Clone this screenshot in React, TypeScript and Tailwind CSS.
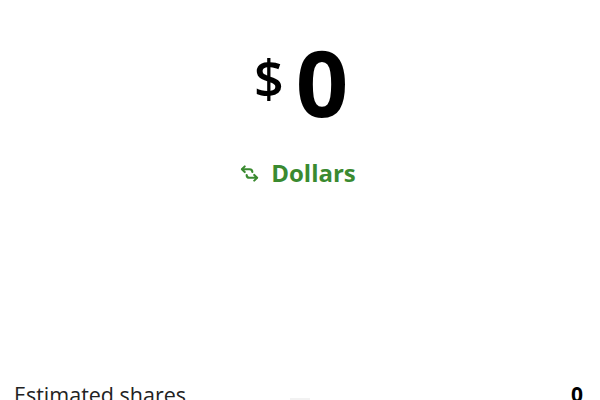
import React from "react";

function SwapIcon() {
  return (
    <svg
      viewBox="0 0 20 20"
      className="h-[19px] w-[19px]"
      fill="none"
      stroke="currentColor"
      strokeWidth={2.2}
      strokeLinecap="round"
      strokeLinejoin="round"
    >
      <path d="M5 2.5 2 5.5 5 8.5" />
      <path d="M2.5 5.5h7.5a3 3 0 0 1 3 3" />
      <path d="M15 11.5l3 3-3 3" />
      <path d="M17.5 14.5H10a3 3 0 0 1-3-3" />
    </svg>
  );
}

export default function App() {
  return (
    <div className="flex h-[400px] w-[600px] flex-col overflow-hidden bg-white font-['Open_Sans',sans-serif] text-black">
      <div className="flex items-start justify-center pt-[36px]">
        <span className="mt-[16px] text-[52px] font-semibold leading-none">$</span>
        <span className="ml-[12px] text-[92px] font-bold leading-none tracking-tight">0</span>
      </div>

      <button
        type="button"
        className="mx-auto mt-[33px] flex -translate-x-[2px] items-center gap-[12px] text-[#3a8a30]"
      >
        <SwapIcon />
        <span className="text-[24px] font-bold leading-none">Dollars</span>
      </button>

      <div className="mt-auto flex items-end justify-between pl-[14px] pr-[17px]">
        <span className="translate-y-[7px] text-[21.5px] leading-none text-[#222]">
          Estimated shares
        </span>
        <span className="translate-y-[7px] text-[21px] font-bold leading-none text-black">
          0
        </span>
      </div>
      <div className="mx-auto h-[2px] w-[20px] bg-[#f2f2f2]" />
    </div>
  );
}
